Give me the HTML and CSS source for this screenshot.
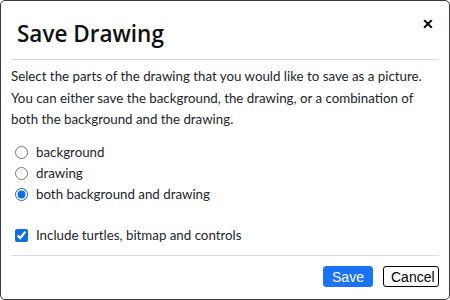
FILE: index.html
```html
<!DOCTYPE html>
<html>
<head>
<meta charset="utf-8">
<link rel="stylesheet" href="styles.css">
</head>
<body>
<div class="dialog">
  <div class="header">
    <h1 class="title">Save Drawing</h1>
    <span class="close">&#x2715;</span>
  </div>
  <div class="body">
    <p class="intro">Select the parts of the drawing that you would like to save as a picture. You can either save the background, the drawing, or a combination of both the background and the drawing.</p>
    <div class="options">
      <label class="opt"><input type="radio" name="part"> background</label>
      <label class="opt"><input type="radio" name="part"> drawing</label>
      <label class="opt"><input type="radio" name="part" checked> both background and drawing</label>
    </div>
    <label class="opt check"><input type="checkbox" checked> Include turtles, bitmap and controls</label>
  </div>
  <div class="footer">
    <button class="btn save">Save</button>
    <button class="btn cancel">Cancel</button>
  </div>
</div>
</body>
</html>
```
FILE: styles.css
```css
html, body { margin: 0; padding: 0; background: #fff; }
body { font-family: Lato, "Open Sans", sans-serif; color: #212529; }
.dialog {
  width: 450px; height: 300px; box-sizing: border-box;
  border: 1px solid #3a3a3a; border-radius: 5px;
  display: flex; flex-direction: column;
}
.header {
  margin: 0 10px; height: 59px; box-sizing: border-box;
  border-bottom: 1px solid #dcdcdc;
  display: flex; justify-content: space-between; align-items: flex-start;
  padding: 0 6px;
}
.title { margin: 0; margin-top: 17px; font-family: "Open Sans", sans-serif; font-size: 22.5px; font-weight: 600; line-height: 32px; color: #111; }
.close { margin-top: 14px; margin-right: -1px; font-size: 14px; font-weight: 700; color: #000; }
.body { padding: 6px 10px 0; flex: 1; font-size: 13.3px; }
.intro { margin: 0; line-height: 21.5px; }
.options { margin-top: 11px; display: flex; flex-direction: column; }
.opt { display: flex; align-items: center; height: 21px; line-height: 21px; }
.opt input { margin: 0 8px 0 4px; width: 13px; height: 13px; accent-color: #0b6fe6; }
.check { margin-top: 20px; }
.footer {
  margin: 0 10px; border-top: 1px solid #dcdcdc; height: 44px; box-sizing: border-box;
  display: flex; justify-content: flex-end; align-items: flex-start; gap: 10px; padding-top: 10px;
}
.btn { font-family: "Liberation Sans", Arial, sans-serif; font-size: 14px; height: 21px; padding: 0 7px; border-radius: 3px; }
.save { background: #1a73f5; color: #fff; border: 1px solid #1a73f5; width: 50px; }
.cancel { background: #fff; color: #000; border: 1px solid #000; width: 56px; }
```
